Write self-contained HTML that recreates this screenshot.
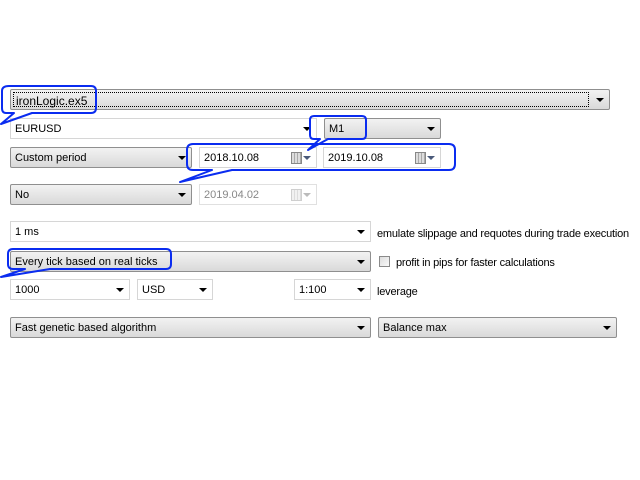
<!DOCTYPE html>
<html><head><meta charset="utf-8"><style>
body{margin:0;width:640px;height:480px;background:#fff;position:relative;overflow:hidden;font-family:"Liberation Sans",Tahoma,sans-serif;font-size:11px;color:#000}
.b{position:absolute;box-sizing:border-box;line-height:20px;padding-left:4px;white-space:nowrap}
.w{background:#fff;border:1px solid #d6d6d6}
.g{background:linear-gradient(#f2f2f2,#e6e6e6 50%,#d9d9d9);border:1px solid #8f8f8f;border-radius:2px}
.a{position:absolute;right:5px;top:8px;width:0;height:0;border-left:4px solid transparent;border-right:4px solid transparent;border-top:4px solid #000}
.dis{color:#888}
.cal{position:absolute;right:14px;top:4px;width:9px;height:10px;border:1px solid #888;background:repeating-linear-gradient(90deg,#ddd 0 2px,#aaa 2px 3px)}
.ca{position:absolute;right:5px;top:8px;border-left:4px solid transparent;border-right:4px solid transparent;border-top:4px solid #4a5a7a}
.l{position:absolute;line-height:14px;letter-spacing:-0.2px}
</style></head><body>
<div class="b g" style="left:10px;top:89px;width:600px;height:21px"><div style="position:absolute;left:2px;top:2px;right:20px;bottom:2px;border:1px dotted #000;padding-left:2px;line-height:17px;font-size:12px">ironLogic.ex5</div><div class="a"></div></div>
<div class="b w" style="left:10px;top:118px;width:307px;height:21px">EURUSD<div class="a"></div></div>
<div class="b g" style="left:324px;top:118px;width:117px;height:21px">M1<div class="a"></div></div>
<div class="b g" style="left:10px;top:147px;width:182px;height:21px">Custom period<div class="a"></div></div>
<div class="b w" style="left:199px;top:147px;width:118px;height:21px">2018.10.08<div class="cal"></div><div class="ca"></div></div>
<div class="b w" style="left:323px;top:147px;width:118px;height:21px">2019.10.08<div class="cal"></div><div class="ca"></div></div>
<div class="b g" style="left:10px;top:184px;width:182px;height:21px">No<div class="a"></div></div>
<div class="b w dis" style="left:199px;top:184px;width:118px;height:21px;border-color:#e0e0e0">2019.04.02<div class="cal" style="opacity:.4"></div><div class="ca" style="border-top-color:#bbb"></div></div>
<div class="b w" style="left:10px;top:221px;width:361px;height:21px">1 ms<div class="a"></div></div>
<div class="l" style="left:377px;top:227px">emulate slippage and requotes during trade execution</div>
<div class="b g" style="left:10px;top:251px;width:361px;height:21px">Every tick based on real ticks<div class="a"></div></div>
<div style="position:absolute;left:379px;top:256px;width:11px;height:11px;box-sizing:border-box;border:1px solid #8a8a8a;background:linear-gradient(135deg,#ddd,#fafafa)"></div>
<div class="l" style="left:396px;top:256px">profit in pips for faster calculations</div>
<div class="b w" style="left:10px;top:279px;width:120px;height:21px">1000<div class="a"></div></div>
<div class="b w" style="left:137px;top:279px;width:76px;height:21px">USD<div class="a"></div></div>
<div class="b w" style="left:294px;top:279px;width:77px;height:21px">1:100<div class="a"></div></div>
<div class="l" style="left:377px;top:285px">leverage</div>
<div class="b g" style="left:10px;top:317px;width:361px;height:21px">Fast genetic based algorithm<div class="a"></div></div>
<div class="b g" style="left:378px;top:317px;width:239px;height:21px">Balance max<div class="a"></div></div>
<svg width="640" height="480" style="position:absolute;left:0;top:0" fill="none" stroke="#0a2cf0" stroke-width="2" stroke-linejoin="round">
<path d="M9,86 H91 Q96,86 96,91 V108 Q96,113 91,113 H32 L1,124 L14,113 H6 Q2,113 2,108 V91 Q2,86 9,86 Z"/>
<path d="M314,116 H362 Q366,116 366,120 V135 Q366,139 362,139 H328 L308,150 L320,139 H314 Q310,139 310,135 V120 Q310,116 314,116 Z"/>
<path d="M193,144 H449 Q455,144 455,150 V164 Q455,170 449,170 H232 L180,182 L212,170 H193 Q187,170 187,164 V150 Q187,144 193,144 Z"/>
<path d="M13,249 H166 Q171,249 171,254 V264 Q171,269 166,269 H50 L1,277 L25,269 H13 Q8,269 8,264 V254 Q8,249 13,249 Z"/>
</svg>
</body></html>
